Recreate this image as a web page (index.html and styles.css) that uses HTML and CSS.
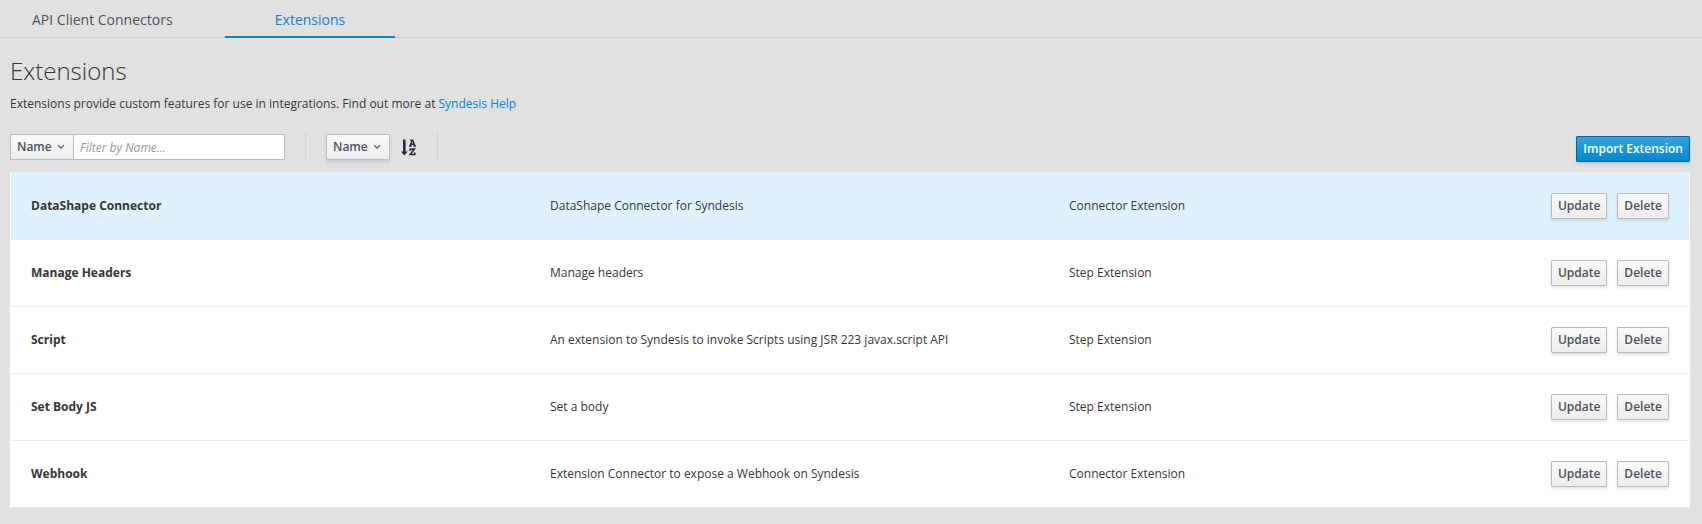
FILE: index.html
```html
<!DOCTYPE html>
<html lang="en">
<head>
<meta charset="utf-8">
<title>Extensions</title>
<link rel="stylesheet" href="styles.css">
</head>
<body>
<nav class="tabs">
  <a class="tab">API Client Connectors</a>
  <a class="tab tab-active">Extensions</a>
</nav>
<main class="page">
  <h1 class="title">Extensions</h1>
  <p class="intro">Extensions provide custom features for use in integrations. Find out more at <a class="link">Syndesis Help</a></p>
  <div class="toolbar">
    <div class="filter">
      <button class="btn btn-select btn-joined">Name<svg class="caret" viewBox="0 0 8 6"><path d="M1 1.2 4 4.2 7 1.2"/></svg></button>
      <input class="filter-input" type="text" placeholder="Filter by Name...">
    </div>
    <div class="sort">
      <button class="btn btn-select">Name<svg class="caret" viewBox="0 0 8 6"><path d="M1 1.2 4 4.2 7 1.2"/></svg></button>
      <svg class="sort-icon" viewBox="0 0 16 17"><path class="shape" d="M2 0.500h2.600v12h2.200L3.300 16.400 0 12.500h2z"/><path class="stroke" d="M8 7h2.600M12.400 7H15M9 7 11.300 1.200h.4L14 7M9.800 5.200h3.400M9.200 1.200h2.500M9.200 12V9.900h4.300L9.100 15.600h4.700v-2.200"/></svg>
    </div>
    <button class="btn btn-primary">Import Extension</button>
  </div>
  <div class="list">
    <div class="row row-hover"><b class="name">DataShape Connector</b><span class="text">DataShape Connector for Syndesis</span><span class="text">Connector Extension</span><div class="actions"><button class="btn">Update</button><button class="btn">Delete</button></div></div>
    <div class="row"><b class="name">Manage Headers</b><span class="text">Manage headers</span><span class="text">Step Extension</span><div class="actions"><button class="btn">Update</button><button class="btn">Delete</button></div></div>
    <div class="row"><b class="name">Script</b><span class="text">An extension to Syndesis to invoke Scripts using JSR 223 javax.script API</span><span class="text">Step Extension</span><div class="actions"><button class="btn">Update</button><button class="btn">Delete</button></div></div>
    <div class="row"><b class="name">Set Body JS</b><span class="text">Set a body</span><span class="text">Step Extension</span><div class="actions"><button class="btn">Update</button><button class="btn">Delete</button></div></div>
    <div class="row"><b class="name">Webhook</b><span class="text">Extension Connector to expose a Webhook on Syndesis</span><span class="text">Connector Extension</span><div class="actions"><button class="btn">Update</button><button class="btn">Delete</button></div></div>
  </div>
</main>
</body>
</html>
```

FILE: styles.css
```css
* { box-sizing: border-box; }
body {
  margin: 0;
  height: 524px;
  overflow: hidden;
  background: #e1e1e1;
  color: #363636;
  font: 12px/20px "Open Sans", "Noto Sans", sans-serif;
}
.tabs {
  display: flex;
  gap: 32px;
  height: 38px;
  border-bottom: 1px solid #cccccc;
}
.tab {
  height: 38px;
  padding: 10px 0 0 32px;
  width: 193px;
  font-size: 14px;
  color: #4d5258;
  white-space: nowrap;
}
.tab-active {
  width: 170px;
  padding-left: 0;
  text-align: center;
  color: #0f83c4;
  border-bottom: 2px solid #0088ce;
}
.page { padding: 0 12px 0 10px; }
.title {
  margin: 0;
  padding-top: 20px;
  font-size: 24px;
  line-height: 26px;
  font-weight: 300;
}
.intro { margin: 0; padding-top: 10px; }
.link { color: #0088ce; }
.toolbar {
  display: flex;
  align-items: flex-start;
  height: 58px;
  padding-top: 18px;
}
.filter, .sort {
  display: flex;
  padding: 2px 20px 0 0;
  border-right: 1px solid #d1d1d1;
  height: 28px;
}
.sort { padding: 2px 20px 0; align-items: center; }
.btn {
  height: 26px;
  padding: 0 6px;
  border: 1px solid #bbbbbb;
  border-radius: 1px;
  background: linear-gradient(#fafafa, #ededed);
  box-shadow: 0 2px 3px rgba(3, 3, 3, 0.1);
  color: #4d5258;
  font: 600 12px/20px "Open Sans", "Noto Sans", sans-serif;
  white-space: nowrap;
}
.btn-select { width: 64px; display: flex; align-items: center; justify-content: space-between; }
.btn-select .caret { margin-right: 2px; }
.btn-joined { border-right: 0; border-radius: 1px 0 0 1px; box-shadow: none; }
.btn-joined .caret { margin-right: 3px; }
.caret { width: 8px; height: 6px; fill: none; stroke: #4d5258; stroke-width: 1.2; }
.filter-input {
  width: 212px;
  height: 26px;
  margin-left: -1px;
  padding: 0 6px;
  border: 1px solid #bbbbbb;
  border-radius: 0 1px 1px 0;
  font: 12px/20px "Open Sans", "Noto Sans", sans-serif;
}
.filter-input::placeholder { color: #999999; font-style: italic; }
.sort-icon { width: 16px; height: 17px; margin: 0 0 0 11px; }
.sort-icon .shape { fill: #292e34; }
.sort-icon .stroke { fill: none; stroke: #292e34; stroke-width: 1.5; }
.btn-primary {
  margin: 4px 0 0 auto;
  border-color: #00659c;
  background: linear-gradient(#39a5dc, #0088ce);
  color: #ffffff;
}
.list { background: #ffffff; }
.row {
  display: grid;
  grid-template-columns: 519px 519px 1fr auto;
  align-items: center;
  height: 67px;
  padding: 0 20px;
  border: 1px solid transparent;
  border-width: 0 1px 1px;
  border-bottom-color: #ebebeb;
  background-clip: padding-box;
}
.row-hover { height: 68px; border-bottom-color: #def3ff; background-color: #def3ff; }
.name { font-weight: 700; }
.actions { display: flex; gap: 10px; }
```
